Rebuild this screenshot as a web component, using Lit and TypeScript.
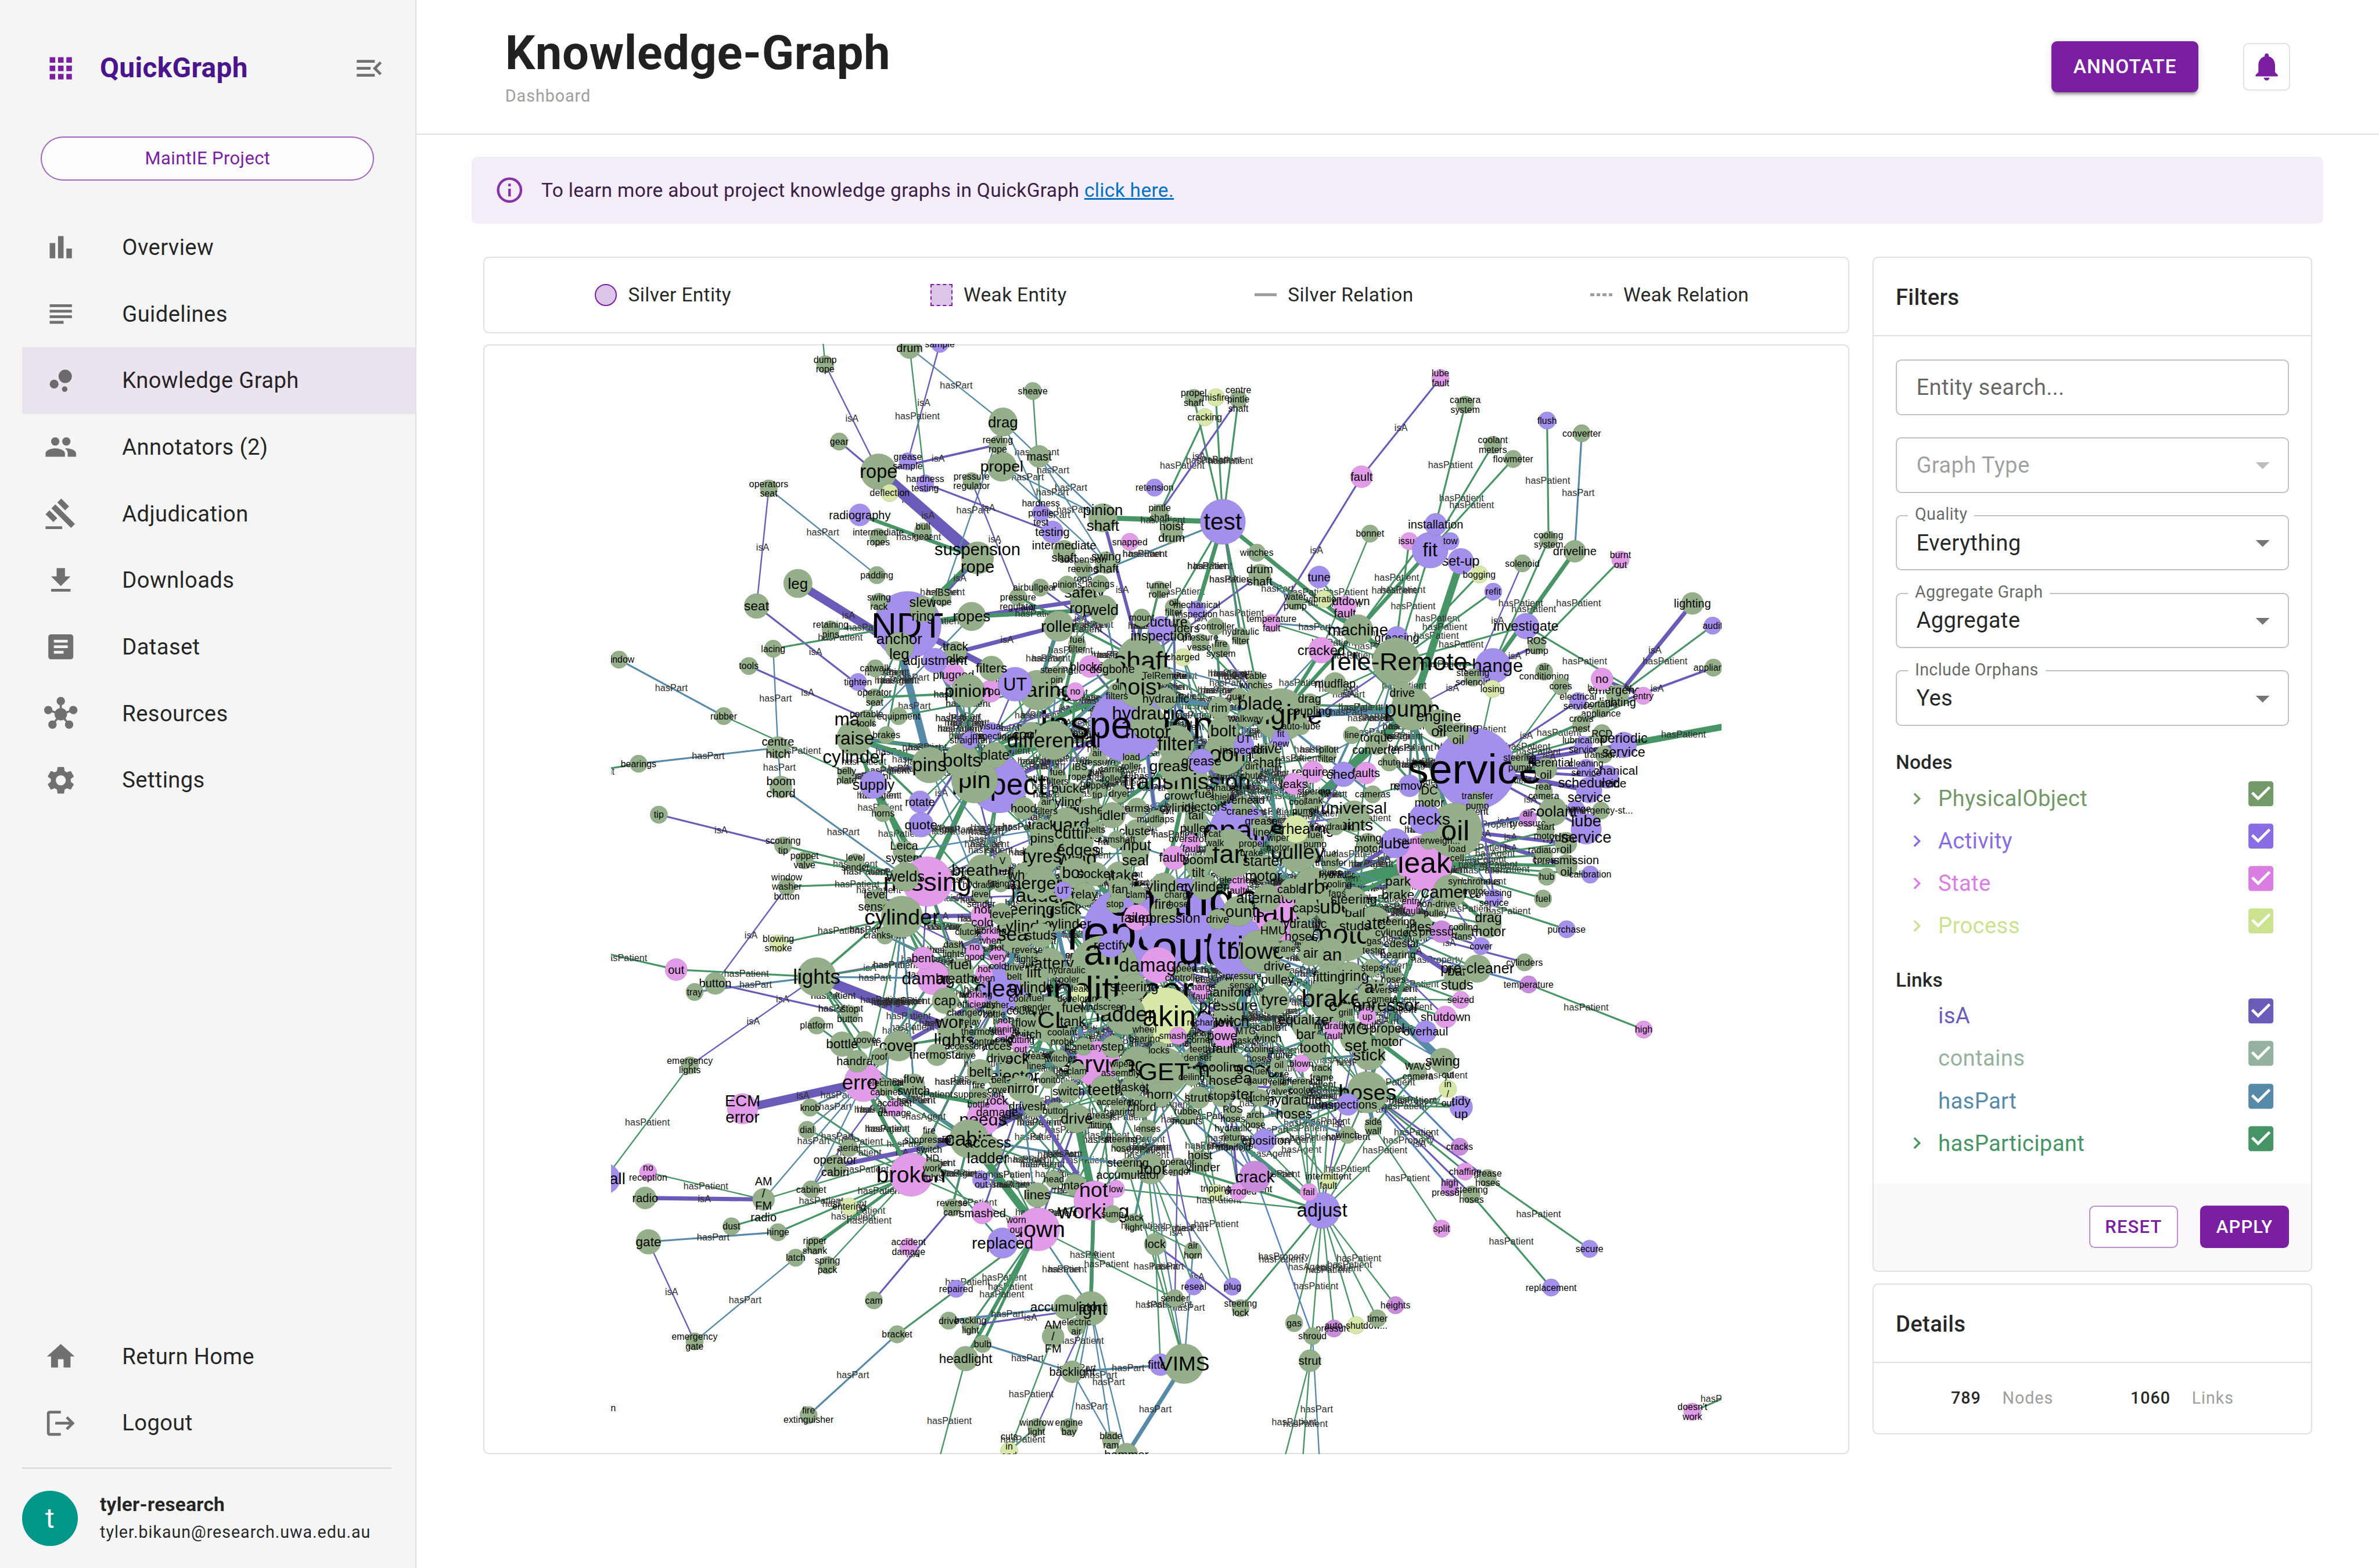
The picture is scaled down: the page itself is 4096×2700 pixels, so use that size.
import { LitElement, css, html, svg, nothing } from 'lit'
import { customElement, property } from 'lit/decorators.js'
import { classMap } from 'lit/directives/class-map.js'
import { styleMap } from 'lit/directives/style-map.js'

/* ---------- icons (24 x 24 grid) ---------- */

const ICONS: Record<string, string> = {
   apps: 'M4 8h4V4H4v4zm6 12h4v-4h-4v4zm-6 0h4v-4H4v4zm0-6h4v-4H4v4zm6 0h4v-4h-4v4zm6-10v4h4V4h-4zm-6 4h4V4h-4v4zm6 6h4v-4h-4v4zm0 6h4v-4h-4v4z',
   menuOpen: 'M3 18h13v-2H3v2zm0-5h10v-2H3v2zm0-7v2h13V6H3zm18 9.59L17.42 12 21 8.41 19.59 7l-5 5 5 5L21 15.59z',
   barChart: 'M4 9h4v11H4zm12 4h4v7h-4zm-6-9h4v16h-4z',
   subject: 'M14 17H4v2h10v-2zm6-8H4v2h16V9zM4 15h16v-2H4v2zM4 5v2h16V5H4z',
   bubble: 'M4 14.4a3.2 3.2 0 1 0 6.4 0a3.2 3.2 0 1 0-6.4 0zM12.8 18a2 2 0 1 0 4 0a2 2 0 1 0-4 0zM10.4 8.8a4.8 4.8 0 1 0 9.6 0a4.8 4.8 0 1 0-9.6 0z',
   people: 'M16 11c1.66 0 2.99-1.34 2.99-3S17.66 5 16 5c-1.66 0-3 1.34-3 3s1.34 3 3 3zm-8 0c1.66 0 2.99-1.34 2.99-3S9.66 5 8 5C6.34 5 5 6.34 5 8s1.34 3 3 3zm0 2c-2.33 0-7 1.17-7 3.5V19h14v-2.5c0-2.33-4.67-3.5-7-3.5zm8 0c-.29 0-.62.02-.97.05 1.16.84 1.97 1.97 1.97 3.45V19h6v-2.5c0-2.33-4.67-3.5-7-3.5z',
   gavel: 'M1 21h12v2H1zM5.245 8.07l2.83-2.827 14.14 14.142-2.828 2.828zM12.317 1l5.657 5.656-2.83 2.83-5.654-5.66zM3.825 9.485l5.657 5.657-2.828 2.828-5.657-5.657z',
   download: 'M5 20h14v-2H5v2zM19 9h-4V3H9v6H5l7 7 7-7z',
   article: 'M19 3H5c-1.1 0-2 .9-2 2v14c0 1.1.9 2 2 2h14c1.1 0 2-.9 2-2V5c0-1.1-.9-2-2-2zm-5 14H7v-2h7v2zm3-4H7v-2h10v2zm0-4H7V7h10v2z',
   hub: 'M8.4 18.2c.38.5.6 1.12.6 1.8 0 1.66-1.34 3-3 3s-3-1.34-3-3 1.34-3 3-3c.44 0 .85.09 1.23.26l1.41-1.77c-.92-1.03-1.29-2.39-1.09-3.69l-2.03-.68c-.54.83-1.46 1.38-2.52 1.38-1.66 0-3-1.34-3-3s1.34-3 3-3 3 1.34 3 3c0 .07 0 .14-.01.21l2.03.68c.64-1.21 1.82-2.09 3.22-2.32V5.91C9.96 5.57 9 4.4 9 3c0-1.66 1.34-3 3-3s3 1.34 3 3c0 1.4-.96 2.57-2.25 2.91v2.16c1.4.23 2.58 1.11 3.22 2.32l2.03-.68c0-.07 0-.14 0-.21 0-1.66 1.34-3 3-3s3 1.34 3 3-1.34 3-3 3c-1.06 0-1.98-.55-2.52-1.37l-2.03.68c.2 1.29-.16 2.65-1.09 3.69l1.41 1.77c.38-.18.79-.27 1.23-.27 1.66 0 3 1.34 3 3s-1.34 3-3 3-3-1.34-3-3c0-.68.22-1.3.6-1.8l-1.41-1.77c-1.35.75-3.01.76-4.37 0L8.4 18.2z',
   settings: 'M19.14 12.94c.04-.3.06-.61.06-.94 0-.32-.02-.64-.07-.94l2.03-1.58c.18-.14.23-.41.12-.61l-1.92-3.32c-.12-.22-.37-.29-.59-.22l-2.39.96c-.5-.38-1.03-.7-1.62-.94l-.36-2.54c-.04-.24-.24-.41-.48-.41h-3.84c-.24 0-.43.17-.47.41l-.36 2.54c-.59.24-1.13.57-1.62.94l-2.39-.96c-.22-.08-.47 0-.59.22L2.74 8.87c-.12.21-.08.47.12.61l2.03 1.58c-.05.3-.09.63-.09.94s.02.64.07.94l-2.03 1.58c-.18.14-.23.41-.12.61l1.92 3.32c.12.22.37.29.59.22l2.39-.96c.5.38 1.03.7 1.62.94l.36 2.54c.05.24.24.41.48.41h3.84c.24 0 .44-.17.47-.41l.36-2.54c.59-.24 1.13-.56 1.62-.94l2.39.96c.22.08.47 0 .59-.22l1.92-3.32c.12-.22.07-.47-.12-.61l-2.01-1.58zM12 15.6c-1.98 0-3.6-1.62-3.6-3.6s1.62-3.6 3.6-3.6 3.6 1.62 3.6 3.6-1.62 3.6-3.6 3.6z',
   home: 'M10 20v-6h4v6h5v-8h3L12 3 2 12h3v8z',
   logout: 'm17 7-1.41 1.41L18.17 11H8v2h10.17l-2.58 2.58L17 17l5-5zM4 5h8V3H4c-1.1 0-2 .9-2 2v14c0 1.1.9 2 2 2h8v-2H4V5z',
   bell: 'M12 22c1.1 0 2-.9 2-2h-4c0 1.1.89 2 2 2zm6-6v-5c0-3.07-1.64-5.64-4.5-6.32V4c0-.83-.67-1.5-1.5-1.5s-1.5.67-1.5 1.5v.68C7.63 5.36 6 7.92 6 11v5l-2 2v1h16v-1l-2-2z',
   info: 'M11,9H13V7H11M12,20C7.59,20 4,16.41 4,12C4,7.59 7.59,4 12,4C16.41,4 20,7.59 20,12C20,16.41 16.41,20 12,20M12,2A10,10 0 0,0 2,12A10,10 0 0,0 12,22A10,10 0 0,0 22,12A10,10 0 0,0 12,2M11,17H13V11H11V17Z',
   dropDown: 'M7 10l5 5 5-5z',
   chevron: 'M10 6 8.59 7.41 13.17 12l-4.58 4.59L10 18l6-6z',
   checkBox: 'M19 3H5c-1.11 0-2 .9-2 2v14c0 1.1.89 2 2 2h14c1.11 0 2-.9 2-2V5c0-1.1-.89-2-2-2zm-9 14l-5-5 1.41-1.41L10 14.17l7.59-7.59L19 8l-9 9z',
}

const icon = (name: string, cls = '') =>
   html`<svg class="icon ${cls}" viewBox="0 0 24 24"><path d=${ICONS[name]}></path></svg>`

/* ---------- graph data ---------- */

type Kind = 'P' | 'A' | 'S' | 'R' | 'Q'

interface GraphNode {
   kind: Kind
   x: number
   y: number
   r: number
   label: string
   under: boolean
}

interface Link {
   type: string
   x1: number
   y1: number
   x2: number
   y2: number
   w: number
}

const NODE_COLORS: Record<Kind, string> = {
   P: '#94af8a', // PhysicalObject
   A: '#a48fec', // Activity
   S: '#e29be8', // State
   R: '#d7e8a8', // Process
   Q: '#c98bdc', // Property
}

const LINK_TYPES: Record<string, [string, string]> = {
   i: ['isA', '#6b5bb9'],
   p: ['hasPart', '#568aa8'],
   t: ['hasPatient', '#479466'],
   g: ['hasAgent', '#479466'],
   y: ['hasProperty', '#5580bd'],
   c: ['contains', '#95b19f'],
}

// Each sector of the layout: origin and vertical scale, then "kind x y radius label" rows.
// "|" breaks a label, "_" before the kind keeps a node beneath its neighbours.
const SECTORS: [number, number, number, string][] = [
   [1300, 740, 0.5102, `P 607 95 19 dump|rope;P 836 24 24 drum;A 918 8 19 sample;P 1170 208 19 sheave;P 1089 339 31 drag;P 1075 435 19 reeving|rope;P 1187 485 24 mast;P 1086 528 32 propel
P 645 422 19 gear;P 752 550 39 rope;A 831 506 19 grease|sample;R 782 640 19 deflection;A 878 600 19 hardness|testing;P 1004 590 19 pressure|regulator;P 454 621 19 operators|seat
A 701 733 24 radiography;P 751 827 19 intermediate|ropes;P 872 803 19 bull|gear;A 1192 724 19 hardness|profile|test;A 1223 805 24 testing;P 1360 745 31 pinion|shaft;A 1500 617 19 retension
P 1514 724 19 pintle|shaft;S 1433 847 19 snapped;P 1020 915 35 suspension|rope;P 1255 887 24 intermediate|shaft;P 1369 935 24 swing|shaft;P 1306 962 19 suspension|reeving|rope
P 747 988 19 padding;P 533 1023 31 leg;P 421 1119 27 seat;P 1190 1041 19 bullgear;P 1263 1028 19 pinions;P 1352 1025 19 lacings;P 1130 1081 19 air|pressure|regulator
P 753 1101 19 swing|rack;A 830 1200 73 NDT;P 872 1132 28 slew|ring;P 925 1082 19 IBS|rope;P 1004 1163 31 ropes;P 1310 1095 31 safety|rope;P 1361 1134 31 weld;P 1240 1204 33 roller
P 622 1218 19 retaining|pins;P 808 1290 31 anchor|leg;_P 868 1275 19 retainer|bolts;A 905 1350 27 adjustment;_P 960 1316 24 track|roller;P 466 1300 19 lacing;P 400 1373 19 tools
P 48 1346 19 window;P 743 1383 19 catwalk;A 696 1441 19 tighten;P 741 1506 19 operator|seat;P 994 1478 36 pinion;_S 955 1410 24 plugged;P 1058 1383 27 filters;_S 1055 1480 24 corroded
A 1122 1450 37 UT;_P 1183 1475 43 bearing;P 1235 1410 19 steering|pin;P 1290 1281 19 fuel|filter;S 1285 1480 19 no;S 1325 1375 24 blocked;P 1385 1385 24 dogbone;P 1465 1350 54 shaft
P 1458 1460 47 hoist;P 1398 1480 19 oil|filters;P 1527 1415 19 TelRemote;P 1465 1168 19 mount;P 1512 1050 19 tunnel|roller;_P 1552 1125 19 oil|filter;A 1518 1217 28 structure|inspection`],
   [2500, 740, 0.5102, `P 41 805 24 hoist|drum;P 101 237 19 propel|shaft;R 161 235 19 misfire;P 222 243 19 centre|pintle|shaft;R 131 319 19 cracking;S 770 153 19 lube|fault;P 837 266 19 camera|system
A 1059 333 19 flush;P 912 436 19 coolant|meters;P 967 496 19 flowmeter;P 1153 387 19 converter;S 556 571 24 fault;A 180 762 49 test;P 272 893 19 winches;P 280 988 24 drum|shaft
A 441 996 24 tune;P 579 812 19 bonnet;A 757 773 24 installation;A 742 882 39 fit;_S 685 844 19 issue;A 797 844 19 tow;_A 825 929 28 set-up;R 875 985 19 bogging;A 913 1058 19 refit
P 992 938 19 solenoid;_P 1063 839 19 cooling|system;P 1134 887 24 driveline;S 1258 923 19 burnt|out;P 1453 1108 24 lighting;A 1508 1202 19 audit;P 1510 1380 19 appliance
A 1002 1204 28 investigate;P 1031 1287 19 ROS|pump;A 912 1372 38 change;P 650 1355 52 Tele-Remote;_A 652 1252 24 greasing;P 546 1220 33 machine;S 447 1306 28 cracked
_S 511 1124 24 shutdown|fault;R 454 1089 19 vibration;P 376 1099 19 water|pump;S 312 1192 19 temperature|fault;_A 109 1134 19 mechanical|inspection;P 160 1205 19 controller
_P 228 1247 19 hydraulic|filter;P 119 1273 19 pressure|vessel;P 175 1300 19 fire|system;R 72 1336 19 charged;_P 65 1213 24 ladders;P 269 1433 19 cable|winches;P 484 1447 24 mudflap
P 415 1537 24 drag|coupling;P 281 1533 38 blade;_P 223 1503 19 guard;P 170 1550 24 rim;P 858 1422 19 steering|solenoid;R 911 1470 19 losing;P 1051 1397 19 air|conditioning
P 1096 1459 19 cores;S 1208 1428 24 no;_P 1250 1500 24 emergency|lighting;S 1320 1499 19 entry;A 1143 1522 19 electrical|service;P 1205 1555 19 portable|appliance;P 666 1487 24 drive`],
   [1300, 1500, 0.5421, `A 1425 125 80 inspection;A 1430 955 100 repair;P 332 90 19 rubber;P 479 216 24 centre|hitch;P 101 280 19 bearings;P 487 373 24 boom|chord;P 156 483 19 tip;P 493 606 19 scouring|tip
P 551 665 19 poppet|valve;P 689 673 19 level|sender;P 503 770 19 window|washer|button;R 480 997 19 blowing|smoke;S 203 1101 24 out;P 309 1156 24 button;P 253 1190 19 tray
P 584 1130 42 lights;P 674 1278 19 stop|button;P 584 1324 19 platform;P 653 1398 27 bottle;_P 714 1381 19 grooves;P 806 1405 33 cover;P 754 1448 19 roof;P 694 1466 24 handrail
S 711 1550 42 error;P 240 1483 19 emergency|lights;P 686 178 38 mast|raise|cylinder;P 719 100 19 portable|tools;P 806 90 19 equipment;P 773 166 19 brakes;P 665 327 19 belly|plate
A 738 364 30 supply;A 864 432 24 rotate;A 867 523 27 quote;P 764 477 19 horns;_P 821 630 24 Leica|system;S 884 750 54 missing;P 825 730 31 welds;_P 744 825 24 level|sensor
P 815 890 45 cylinder;_P 769 965 19 crankshaft;S 872 1055 24 bent;S 900 1135 36 damage;P 890 285 39 pins;P 978 268 38 bolts;P 1012 345 50 pin;A 1078 362 62 inspect;P 1067 245 28 plate
A 1000 185 19 straighten;A 1057 150 19 visual|inspection;_P 1165 165 28 cooler;P 1227 187 42 differential;_P 1345 255 19 low|air|pressure|regulator;P 1437 272 19 load|roller
P 1482 115 37 hydraulic|motor;P 1145 458 24 hood;P 1207 450 19 air|filters;P 1237 332 19 fuel|filters;P 1297 312 19 IBS|ropes;P 1385 320 19 carrier|roller;_P 1273 405 27 bucket|cylinder
P 1345 385 19 ripper|tip;P 1405 400 19 dryer;_P 1325 465 26 bushes;P 1386 485 28 idler;P 1452 457 22 arms;P 1260 525 38 guard;P 1195 550 27 track|pins;P 1340 543 19 belts;P 1452 547 25 cluster
P 1503 500 19 mudflaps;P 1397 583 19 camshaft;P 1293 590 33 cutting|edges;P 1195 650 38 tyres;P 1235 615 40 tool;P 1290 655 40 wing;P 1088 668 19 V;P 1033 705 34 breather
P 1083 757 19 fittings;_P 1150 725 28 wheel;P 1190 755 36 emergency;P 1284 715 33 box;P 1340 720 26 socket;P 1405 725 30 intake;P 1448 635 30 input|seal;A 1252 785 19 UT
P 1310 800 25 relay;P 1185 805 40 ladder;P 1406 780 24 fan;P 1455 803 19 clamp;P 1393 840 19 stop;P 1030 800 19 hydraulic|level|sender;S 1033 885 25 not|cold;P 1085 880 24 level
P 1150 893 34 steering|cylinder;P 1265 890 28 stick|cylinder;P 1225 860 50 ATC;S 1452 893 28 failed;P 1525 868 28 fire|suppression;P 1363 1105 76 air|conditioner;A 1382 1003 27 rectify
S 1510 1083 39 damaged;P 1445 1170 28 steering;R 1297 1197 19 leak|developing;P 1420 1280 44 ladder;P 1215 1300 50 ICL;P 1278 1280 28 fuel|tank;P 1360 1248 19 windscreen
P 1150 1312 24 coolant|flow|switch;S 1092 1340 19 not|running|cold;P 975 1108 28 fuel|breather;S 1038 1117 19 hot|when;S 1012 1030 19 no|good;S 1055 965 19 working|when
S 1075 1050 19 not|very|cold;P 992 950 19 clutch;P 955 1020 19 dash|lights;P 1155 1040 19 reverse|lights;P 1215 1075 33 battery;P 1193 965 27 studs;P 1173 1142 30 lift|cylinder
P 1120 1110 19 drive|belt;P 1120 960 40 seal;A 1090 1175 50 clean;P 1262 1122 19 hydraulic|cooler;P 932 1225 28 cap;P 1065 1260 19 washer|bottle;S 1017 1220 19 working|efficiently
P 1145 1236 19 coolant|sender;P 1180 1232 19 fuel|sender;P 957 1345 36 work|lights;P 1003 1290 19 changeover|relay;P 1035 1368 19 thermostat|control;P 910 1440 24 thermostat
P 988 1425 19 accessory|drive;S 1137 1400 19 cutting|out;P 1080 1430 24 access|drive;P 1250 1370 19 coolant|probe;P 1308 1408 19 planetary;P 1387 1408 24 step;S 1345 1478 50 service
P 1243 1455 19 switches;P 1290 1505 19 clam;P 1408 1495 19 wiper|assembly;P 1473 1358 19 wheel|bearing;P 1512 1423 19 locks;P 1180 1465 19 grease|lines;P 1120 1490 34 rock|ejector
P 1027 1510 28 belt;_P 1455 1480 40 auger;P 1212 1540 19 monitor`],
   [2500, 1500, 0.5421, `A 863 300 88 service;A 75 915 97 change|out;A 225 1015 66 trip;A 222 545 62 repairs;P 338 85 57 engine;P 693 62 46 pump;P 181 150 33 bolt;A 237 205 22 UT|inspection
P 185 240 46 boom;P 52 200 40 filter;A 122 270 27 grease;P 45 290 32 grease;P 300 248 28 drive|shaft;P 258 308 19 dirt|chute;A 337 180 19 fit|new;P 392 130 19 auto-lube
P 242 100 19 walkway;P 530 166 19 line;P 597 200 24 torque|converter;P 464 242 19 pilot|filter;P 631 275 19 chute;S 424 313 24 requires;S 373 360 24 leaks;A 507 322 27 check
S 568 317 24 faults;P 586 402 19 cameras;A 686 368 24 remove;P 765 120 31 engine|oil;P 818 160 24 steering|oil;P 985 275 19 steering|pump;P 1056 300 24 differential|oil
P 1050 390 19 rear|camera;A 1267 205 28 periodic|service;_A 1158 205 19 lubrication|service;A 1165 297 19 cleaning|service;_A 1222 332 25 mechanical|service;A 1173 385 28 scheduled|service
_P 1208 160 20 RCD;_P 1213 243 19 transform;P 1152 120 19 crows|nest;P 1075 470 31 coolant;_A 1137 460 19 change;_P 1205 467 19 emergency-st...;A 1165 540 33 lube|service
Q 1007 497 19 air|pressure;P 1055 550 19 start|motor;_P 1110 597 24 hydraulic|oil;P 1050 643 19 radiator|cores;P 1111 687 24 transmission|oil;A 1176 722 19 calibration;P 1058 730 19 hub
P 1048 818 19 fuel;P 870 428 19 transfer|pump;P 810 545 59 oil;A 727 500 34 checks;A 647 597 32 lube;S 726 675 60 leak;P 738 587 19 counterweigh...;P 815 637 19 load|cell
P 573 597 22 swing|motor;P 655 775 27 park|brake;P 795 790 36 camera;A 915 815 19 greasing|service;P 862 768 19 synchronous|motor;S 692 847 19 entry|fault;P 758 857 19 non-drive|pulley
P 900 922 28 drag|motor;Q 773 950 24 pressure;A 1112 940 19 purchase;A 880 1007 19 cover;P 832 950 19 cooling|fans;P 998 1072 19 cylinders;Q 1009 1160 19 temperature;S 1321 1340 19 high
P 870 1097 30 pre-cleaner;_P 815 1135 28 bar|studs;S 825 1222 19 seized;S 784 1290 24 shutdown;A 730 1348 24 overhaul;P 776 1465 28 swing;P 709 1507 19 WAVS|camera;P 577 1440 34 stick
P 540 1370 34 MG|set;S 572 1288 19 tray|up|fault;P 625 1362 26 propel|motor;P 478 1215 52 brake;P 320 1222 33 tyre;P 513 1272 19 grill;P 590 1205 36 air|compressor;P 525 1125 30 wiring
P 467 1130 28 fitting;P 512 960 58 motor;P 590 915 36 hatch;P 538 900 27 ball|studs;P 480 850 40 lube;P 406 855 27 caps;S 340 875 60 fault;P 222 868 33 mounts;P 300 815 30 alternator
S 222 765 20 electrical|faults;P 166 900 22 drive;P 317 945 24 HMU;P 393 945 26 hydraulic|hoses;P 280 1028 46 blower;P 353 1018 19 cranes;P 418 1035 28 air;P 470 1040 36 fan
P 328 1115 26 drive|pulley;P 236 1145 19 pressure|sensor;P 75 1115 19 speed|controller;S 122 1188 19 charge|fault;P 190 1190 27 manifold;P 195 1275 31 pressure|switch;A 132 1312 19 recharge
S 184 1365 26 low|power|fault;S 58 1365 19 smashed;R 25 1285 61 leaking;P 383 632 43 pulley;R 378 540 30 overheating;P 535 490 34 universal|joints;P 485 530 19 hydraulic;P 430 582 19 fuel|pump
P 200 640 54 fan;P 290 697 30 starter|motor;P 158 577 19 cat|walk;P 258 617 19 propel|brake;P 330 595 19 wiper|motor;P 284 530 22 grease|line;S 48 655 26 faulty;P 113 690 26 boom|tilt
P 107 510 25 tail|pulley;P 233 447 22 overhead|cranes;S 95 600 20 overstroke|fault;P 82 350 47 transmission;P 65 430 25 crowd|cylinder;P 130 425 25 fuel|injectors;P 178 395 19 exhaust|shield
P 365 780 24 cable;P 425 770 42 turbo;P 490 760 19 hydraulic|cooling|fans;P 400 450 19 coolant|pump;P 427 427 19 steering|tank|oil;P 473 675 19 fuel|transfer|pump;P 535 820 27 steering
S 480 1345 20 hydraulic|fault;P 405 1330 28 equalizer|bar;P 430 1410 29 tooth;P 302 1352 22 cable|winch;P 242 1365 19 MTG|gasket;S 393 1475 19 blown;P 448 1512 19 track|frame
P 332 1480 19 engine|oil|hose;P 278 1437 19 cooling|hoses;P 180 1517 27 cooling|hose;_P 190 1500 47 compressor;P 280 1525 19 fuel|gauge;_P 92 1453 19 condenser;P 95 1530 19 ceiling
P 118 1400 19 corner|teeth;P 655 1020 22 pedestal|bearing;P 590 1005 19 gas|tester;P 650 932 22 steering|cylinders;_P 715 930 28 pedestal;P 585 1093 19 steps;P 642 1120 19 fuel|hoses
P 612 1200 19 reverse|camera;P 740 410 24 DC|motor;P 20 1507 52 GET;P 60 820 19 charge|hose;P 130 770 28 cylinder;P 20 770 30 cylinder;P 25 20 24 hydraulic`],
   [1300, 2330, 0.5293, `S 383 128 33 ECM|error;P 566 123 19 knob;P 558 214 19 dial;S 127 388 19 no|reception;P 119 492 24 radio;P 440 498 24 AM|/|FM|radio;A 10 413 33 install;P 128 671 27 gate
P 353 608 19 dust;P 479 632 19 hinge;P 579 687 19 ripper|shank;P 527 736 19 latch;P 613 767 19 spring|pack;P 569 457 19 cabinet;P 634 361 24 operator|cabin;P 672 288 19 aerial
R 672 527 19 entering;S 840 397 47 broken;P 898 370 19 HD|work|lights;P 889 255 19 fire|suppression|switch;P 997 250 42 cabin;P 1048 297 31 access|ladder;_S 1035 170 36 needs
S 1073 118 24 rock|damage;A 1030 418 19 tag|out;S 795 125 19 accident|damage;P 951 531 19 reverse|cam;S 1033 553 24 smashed;P 1182 480 27 lines;S 1184 620 47 down;S 1125 602 19 worn|out
A 1088 676 33 replaced;S 833 692 19 accident|damage;A 962 863 19 repaired;P 739 910 19 cam;P 942 993 19 drive;P 1001 1012 19 backing|light;P 802 1049 19 bracket;P 1034 1088 19 bulb
P 988 1148 27 headlight;P 562 1379 19 fire|extinguisher;P 253 1078 19 emergency|gate;P 1260 938 27 accumulator;P 1327 943 37 light;P 1225 1058 24 AM|/|FM;P 1288 1018 19 electric|air
P 1277 1202 24 backlight;P 1180 1428 19 windrow|light;P 1268 1428 19 engine|bay;R 1106 1525 19 cuts|in|and|out;P 1382 1482 19 blade|ram;P 1424 1540 25 hammer;P 1502 681 24 lock
P 1444 592 19 back|light;P 1386 558 19 sump;S 1335 503 43 not|working;S 1395 455 19 low;_P 1285 440 24 contactor;P 1227 415 19 head;P 1428 373 24 steering|accumulator;P 1490 373 33 door
P 1409 270 19 steering|hose;P 1480 208 19 lenses;P 1465 120 24 chord;P 1405 120 19 accelerator|bearing;P 1289 168 31 drive;P 1231 135 19 button;P 1173 117 24 driveshaft;P 1138 45 28 mirror
P 1078 30 19 belt|cover;P 1267 57 24 switch;P 1438 40 24 gasket;P 1514 70 27 horn;P 1355 175 19 grease|fitting;P 1023 70 19 fire|suppression|bottle;_A 1516 1173 24 fitted;P 847 30 24 flow|switch
P 770 40 19 electrical|cabinet;P 1367 50 33 teeth;P -4 1350 19 junction`],
   [2500, 2330, 0.5293, `P 75 1169 43 VIMS;P 50 902 19 sender;P 99 706 19 air|horn;A 101 853 19 reseal;A 206 854 19 plug;P 228 942 19 steering|lock;P 118 342 24 hoist|cylinder;P 57 364 19 operator|sender
R 161 472 19 tripping|out;_S 222 466 19 corroded;Q 267 405 34 crack;A 292 257 25 reposition;P 208 245 19 hydraulic|return|manifold;P 207 150 19 ROS|hoses;P 84 158 19 rubber|mounts
P 268 172 19 arch|hose;P 373 120 28 hydraulic|hoses;A 519 110 24 inspections;P 518 234 19 winch;P 588 200 19 side|wall;A 826 121 25 tidy|up;Q 822 283 19 cracks;S 837 384 19 chaffing
P 898 411 19 grease|hoses;Q 795 450 19 high|pressure;P 854 478 19 steering|hoses;S 773 617 19 split;A 1174 700 19 secure;A 1070 858 19 replacement;S 413 468 19 fail
R 466 422 19 intermittent|fault;A 449 543 39 adjust;P 373 1003 19 gas;Q 481 1025 19 pressure;P 423 1056 19 shroud;R 541 1012 19 auto-shutdow...;P 599 984 19 timer;Q 648 930 19 heights
P 416 1157 24 strut;S 1453 1365 19 doesn't|work;P 281 83 19 latches;P 115 82 24 struts;P 177 75 24 stops;P 235 35 32 rear|step;P 333 38 19 relief|valves;P 392 33 19 differential|cooler
P 572 60 45 hoses;R 790 47 19 cut|in|/|out`],
]

const NODES: GraphNode[] = SECTORS.flatMap(([ox, oy, sy, rows]) =>
   rows.split(/[;\n]/).map((row) => {
      const [kind, x, y, r, ...label] = row.trim().split(' ')
      return {
         kind: kind.replace('_', '') as Kind,
         x: ox + Number(x) * 0.7972,
         y: oy + Number(y) * sy,
         r: Number(r),
         label: label.join(' '),
         under: kind.startsWith('_'),
      }
   })
)

// "type width source > target"; "@x,y" is a node that lies beyond the visible canvas.
const LINK_ROWS = `i 3 dump|rope>rope;t 3 dump|rope>@1762,560;i 3 sample>grease|sample;p 3 drum>drag;t 3 drum>hardness|testing;t 3 sheave>hardness|profile|test;i 4 gear>suspension|rope
i 5 reeving|rope>rope;i 26 rope>suspension|rope;p 3 operators|seat>padding;i 3 operators|seat>seat;t 8 radiography>suspension|rope;p 3 mast>pinion|shaft;p 3 drag>pinion|shaft
p 3 propel>pinion|shaft;p 3 drag>IBS|rope;p 3 drag>testing;p 3 propel>swing|shaft;p 3 mast>swing|shaft;i 4 hardness|testing>testing;i 3 pressure|regulator>air|pressure|regulator
p 4 suspension|rope>NDT;t 14 suspension|rope>NDT;i 4 suspension|rope>IBS|rope;i 18 leg>anchor|leg;i 4 seat>operator|seat;p 4 window>rubber;t 4 lacing>NDT;p 3 lacing>centre|hitch
i 4 tools>portable|tools;t 4 retaining|pins>NDT;t 11 pinion|shaft>test;i 7 pinion|shaft>shaft;t 3 rubber>supply;p 4 centre|hitch>bearings;t 4 bearings>@1180,1685
p 3 centre|hitch>boom|chord;p 4 boom|chord>welds;i 4 tip>scouring|tip;t 4 scouring|tip>missing;t 4 level|sender>missing;t 4 poppet|valve>missing;t 4 window|washer|button>missing
i 3 window|washer|button>button;t 4 blowing|smoke>cylinder;t 4 out>lights;t 4 out>@1240,2046;p 4 tray>lights;i 4 button>stop|button;i 3 emergency|lights>lights;i 22 lights>work|lights
i 4 lights>bent;p 4 lights>damage;t 3 lights>missing;t 3 emergency|lights>install;i 18 ECM|error>error;t 3 no|reception>AM|/|FM|radio;i 9 radio>AM|/|FM|radio;i 3 gate>emergency|gate
p 4 gate>hinge;p 3 latch>emergency|gate;t 4 latch>broken;t 6 ripper|shank>broken;t 3 spring|pack>broken;t 4 dust>broken;t 4 hinge>broken;p 3 AM|/|FM|radio>error;t 3 AM|/|FM|radio>cabin
t 4 knob>broken;t 4 dial>broken;p 4 knob>error;p 3 dial>error;t 4 entering>broken;i 10 operator|cabin>cabin;i 3 cabinet>electrical|cabinet;p 3 cabinet>error;t 3 aerial>cabin
i 4 cam>reverse|cam;p 4 bracket>fire|extinguisher;t 4 bracket>down;t 4 drive>down;t 4 backing|light>down;t 6 bulb>down;t 8 headlight>down;p 5 drive>accumulator;i 4 backing|light>light
p 4 bulb>backlight;t 3 headlight>@2017,3206;p 5 backlight>VIMS;p 3 backlight>blade|ram;i 3 windrow|light>light;t 4 windrow|light>cuts|in|and|out;p 3 light>blade|ram;p 3 light>hammer
p 3 light>engine|bay;p 9 VIMS>hammer;t 3 AM|/|FM>cuts|in|and|out;t 3 lock>fitted;i 8 light>not|working;t 8 light>not|working;t 3 light>down;p 3 light>down;t 3 backlight>light
p 3 fitted>VIMS;i 4 lock>steering|lock;i 3 sender>operator|sender;t 4 adjust>steering|lock;g 3 adjust>gas;t 3 adjust>strut;t 3 adjust>pressure;t 3 adjust>auto-shutdow...
t 3 adjust>timer;t 3 adjust>heights;y 3 crack>shroud;p 3 shroud>@2855,3205;t 3 strut>@2763,3206;t 3 strut>@2812,3212;g 3 fail>hydraulic|hoses;t 3 fail>blown;t 3 intermittent|fault>hoses
g 3 intermittent|fault>latches;t 3 side|wall>adjust;t 3 side|wall>split;t 4 side|wall>WAVS|camera;t 4 grease|hoses>secure;t 4 steering|hoses>replacement;y 4 cracks>stick
i 4 hoses>grease|hoses;i 4 hoses>steering|hoses;y 4 hoses>high|pressure;t 4 hoses>chaffing;t 5 hoses>tidy|up;t 4 inspections>tidy|up;i 3 winch>cable|winch;p 8 hoses>side|wall
p 3 plug>door;t 3 plug>hoist|cylinder;t 3 reseal>door;i 3 air|horn>horn;t 3 air|horn>not|working;t 3 corroded>stops;t 3 tripping|out>struts;y 4 crack>ROS|hoses;y 4 crack>rubber|mounts
i 10 hydraulic|hoses>inspections;i 4 hydraulic|hoses>arch|hose;t 4 reposition>inspections;g 3 fail>ROS|hoses;t 3 VIMS>lock;p 3 VIMS>door;t 3 sender>down
t 4 propel|shaft>test;t 4 misfire>test;t 4 centre|pintle|shaft>test;t 4 cracking>pintle|shaft;i 4 centre|pintle|shaft>pintle|shaft;i 4 lube|fault>fault;i 4 fault>temperature|fault
t 4 camera|system>installation;t 4 coolant|meters>fit;t 4 flowmeter>fit;t 4 flush>cooling|system;p 4 converter>driveline;t 3 bonnet>cracked;t 9 driveline>change;t 4 cooling|system>change
i 3 solenoid>steering|solenoid;t 4 burnt|out>ROS|pump;t 4 investigate>entry;i 9 lighting>emergency|lighting;t 4 audit>emergency|lighting;i 5 appliance>portable|appliance
t 9 test>Tele-Remote;t 4 test>blade;t 4 test>shaft;t 16 set-up>pump;t 4 fit>Tele-Remote;t 4 fit>machine;t 8 fit>engine;t 4 installation>machine;t 4 bogging>Tele-Remote;t 4 refit>Tele-Remote
t 4 issue>greasing;t 4 tune>machine;i 4 water|pump>pump;p 5 drum|shaft>water|pump;t 5 drum|shaft>machine;i 4 drum|shaft>shaft;t 11 machine>Tele-Remote;t 16 Tele-Remote>pump
t 8 cracked>engine;i 6 change>ROS|pump;t 5 change>Tele-Remote;t 4 investigate>Tele-Remote;p 16 pump>engine;t 3 losing>service;t 3 cores>oil;p 4 temperature|fault>machine;t 20 change|out>pump
i 7 no>entry;t 4 no>emergency|lighting;t 14 periodic|service>@3768,1564;i 9 periodic|service>service;i 11 scheduled|service>service;i 6 mechanical|service>service;i 5 lube|service>service
i 5 cleaning|service>service;i 5 lubrication|service>service;i 4 electrical|service>service;t 4 entry>service;t 4 RCD>service;t 4 crows|nest>service;t 5 differential|oil>service
t 3 rear|camera>service;i 6 oil>coolant;i 8 oil>hydraulic|oil;i 9 oil>transmission|oil;t 4 leak>hub;t 4 leak>fuel;t 7 leak>transmission|oil;t 4 leak>radiator|cores;t 4 calibration>leak
t 4 start|motor>leak;g 4 hydraulic|oil>leak;y 4 air|pressure>oil;i 4 greasing|service>service;t 8 camera>drag|motor;t 4 purchase>camera;t 4 temperature>high;y 4 temperature>motor
i 4 cylinders>hatch;i 10 hatch>bar|studs;y 4 pressure>motor;i 4 cover>pedestal;t 4 seized>steps;t 4 shutdown>air|compressor;p 16 swing>air|compressor;t 5 WAVS|camera>hoses;t 4 overhaul>brake
t 4 cut|in|/|out>swing;t 26 leak>change|out;i 14 oil>service;t 14 service>leak;t 12 NDT>ropes;i 9 ropes>safety|rope;i 9 track|roller>roller;i 14 NDT>filters;p 16 anchor|leg>pins
p 12 mast|raise|cylinder>pins;i 6 roller>weld;t 12 supply>missing;t 12 pin>missing;t 26 bolts>differential;i 9 cylinder>not|cold;i 12 missing>cylinder;i 12 engine>bolt
i 16 cabin>driveshaft;t 16 down>cabin;t 16 not|working>drive;t 12 lines>down;i 12 work|lights>clean;p 9 roller>bearing;t 9 weld>ropes;i 9 inspection>inspect;t 8 safety|rope>weld
t 4 doesn't|work>@3790,2995`

function findNode(label: string, near?: { x: number; y: number }) {
   const hits = NODES.filter((n) => n.label === label)
   if (!near || hits.length < 2) return hits[0]
   return hits.reduce((a, b) => (Math.hypot(a.x - near.x, a.y - near.y) <= Math.hypot(b.x - near.x, b.y - near.y) ? a : b))
}

function buildLinks(): Link[] {
   const links: Link[] = []
   const linked = new Set<GraphNode>()
   for (const row of LINK_ROWS.split(/[;\n]/)) {
      const [, type, w, from, to] = row.trim().match(/^(\w) (\d+) (.+)>(.+)$/)!
      let a = findNode(from)
      let b: { x: number; y: number } | undefined
      if (to.startsWith('@')) {
         const [x, y] = to.slice(1).split(',').map(Number)
         b = { x, y }
      } else {
         b = findNode(to, a)
         if (b) a = findNode(from, b)
      }
      if (!a || !b) continue
      linked.add(a)
      links.push({ type, x1: a.x, y1: a.y, x2: b.x, y2: b.y, w: Number(w) })
   }
   // the crowded middle: every node reaches for a few of the hubs around it
   const hubs = NODES.filter((n) => n.r >= 38)
   NODES.forEach((n, i) => {
      const reach = Math.hypot(n.x - 2480, n.y - 2000)
      if (reach > 770) return
      const near = hubs
         .filter((h) => h !== n)
         .map((h) => ({ h, d: Math.hypot(h.x - n.x, h.y - n.y) }))
         .filter(({ d }) => d > n.r + 40 && d < 620)
         .sort((a, b) => a.d - b.d)
      const count = linked.has(n) ? 1 : 3
      for (let k = 0; k < count && near.length; k++) {
         const { h } = near[(i * 5 + k * 7) % Math.min(near.length, reach > 600 ? 7 : 14)]
         const pick = (i + k * 3) % 8
         const type = n.kind === 'Q' ? 'y' : pick < 4 ? 't' : pick === 4 ? 'g' : pick === 5 ? 'i' : pick === 6 ? 'p' : n.kind === 'P' ? 'p' : 't'
         links.push({ type, x1: n.x, y1: n.y, x2: h.x, y2: h.y, w: (i + k) % 23 === 0 ? 9 : (i + k) % 9 === 0 ? 5 : 3.2 })
      }
   })
   return links
}

const LINKS = buildLinks()
const DRAWN = [...NODES].sort((a, b) => Number(b.under) - Number(a.under) || b.r - a.r)

@customElement('knowledge-graph')
export class KnowledgeGraph extends LitElement {
   static styles = css`
      :host {
         display: block;
         width: 800px;
         height: 800px;
      }
      .canvas {
         display: block;
         width: 100%;
         height: 100%;
         overflow: hidden;
         font-family: 'Liberation Sans', Arial, sans-serif;
      }
      text {
         text-anchor: middle;
         dominant-baseline: central;
      }
      .link-label {
         font-size: 20.2px;
         fill: #2b2b2b;
      }
      circle {
         stroke: rgba(80, 100, 70, 0.25);
         stroke-width: 1;
      }
   `

   renderLink(l: Link) {
      const [name, color] = LINK_TYPES[l.type]
      return svg`
         <line x1=${l.x1} y1=${l.y1} x2=${l.x2} y2=${l.y2} stroke=${color} stroke-width=${l.w}></line>
         <text class="link-label" x=${(l.x1 + l.x2) / 2} y=${(l.y1 + l.y2) / 2}>${name}</text>`
   }

   renderNode(n: GraphNode) {
      const size = n.r * 1.04
      const lines = n.label.split('|')
      return svg`
         <circle cx=${n.x} cy=${n.y} r=${n.r} fill=${NODE_COLORS[n.kind]}></circle>
         ${lines.map((line, i) => svg`
            <text x=${n.x} y=${n.y + (i - (lines.length - 1) / 2) * size * 1.04} font-size=${size}>${line}</text>`)}`
   }

   render() {
      return html`
         <svg class="canvas" viewBox="1321 744 2400 2400">
            ${LINKS.map((l) => this.renderLink(l))}
            ${DRAWN.map((n) => this.renderNode(n))}
         </svg>
      `
   }
}

/* ---------- filter tree ---------- */

interface TreeItem {
   label: string
   color: string
   open?: boolean
}

const NODE_ITEMS: TreeItem[] = [
   { label: 'PhysicalObject', color: '#739968', open: true },
   { label: 'Activity', color: '#886ce4', open: true },
   { label: 'State', color: '#da7ee3', open: true },
   { label: 'Process', color: '#cbe28f', open: true },
]

const LINK_ITEMS: TreeItem[] = [
   { label: 'isA', color: '#6b5bb9' },
   { label: 'contains', color: '#95b19f' },
   { label: 'hasPart', color: '#568aa8' },
   { label: 'hasParticipant', color: '#479466', open: true },
]

@customElement('filter-tree')
export class FilterTree extends LitElement {
   @property() heading = ''
   @property({ attribute: false }) items: TreeItem[] = []

   static styles = css`
      :host {
         display: block;
         margin-top: 16.4px;
      }
      .heading {
         height: 17px;
         line-height: 20px;
         font-size: 14px;
         font-weight: 500;
         letter-spacing: 0.1px;
      }
      .row {
         display: flex;
         align-items: center;
         height: 30.62px;
         padding: 0 8.4px 0 6.6px;
      }
      .icon {
         flex: none;
         width: 24px;
         height: 24px;
         fill: currentColor;
      }
      .toggle {
         display: flex;
         width: 18px;
         margin-right: 6px;
         padding-top: 7px;
      }
      .chevron {
         width: 17px;
         height: 17px;
      }
      .label {
         flex: 1;
         padding-top: 7.4px;
         font-size: 16px;
         line-height: 23px;
         letter-spacing: 0.15px;
      }
   `

   render() {
      return html`
         <div class="heading">${this.heading}</div>
         ${this.items.map((item) => html`
            <div class="row" style=${styleMap({ color: item.color })}>
               <span class="toggle">${item.open ? icon('chevron', 'chevron') : nothing}</span>
               <span class="label">${item.label}</span>
               ${icon('checkBox')}
            </div>
         `)}
      `
   }
}

/* ---------- page ---------- */

const NAV = [
   ['barChart', 'Overview'],
   ['subject', 'Guidelines'],
   ['bubble', 'Knowledge Graph'],
   ['people', 'Annotators (2)'],
   ['gavel', 'Adjudication'],
   ['download', 'Downloads'],
   ['article', 'Dataset'],
   ['hub', 'Resources'],
   ['settings', 'Settings'],
]

const NAV_BOTTOM = [
   ['home', 'Return Home'],
   ['logout', 'Logout'],
]

const SELECTS = [
   ['Quality', 'Everything'],
   ['Aggregate Graph', 'Aggregate'],
   ['Include Orphans', 'Yes'],
]

@customElement('app-root')
export class AppRoot extends LitElement {
   static styles = css`
      * { box-sizing: border-box }

      :host {
         display: block;
         width: 4096px;
         height: 2700px;
         overflow: hidden;
         background: #fff;
      }

      /* the page is laid out on a 1714px wide grid and scaled up */
      .page {
         display: flex;
         zoom: 2.38973;
         width: 1714px;
         height: 1130px;
         font-family: Roboto, 'Liberation Sans', sans-serif;
         font-size: 16px;
         letter-spacing: 0.15px;
         color: rgba(0, 0, 0, 0.87);
      }

      .icon {
         flex: none;
         width: 24px;
         height: 24px;
         fill: currentColor;
      }

      /* sidebar */
      .sidebar {
         display: flex;
         flex-direction: column;
         width: 300px;
         height: 1130px;
         background: #f5f5f5;
         border-right: 1px solid #e0e0e0;
      }
      .brand {
         display: flex;
         align-items: center;
         height: 98.2px;
         padding: 0 21px 0 32px;
         color: #7b1fa2;
      }
      .brand-name {
         flex: 1;
         margin-left: 16px;
         font-size: 20px;
         font-weight: 700;
         letter-spacing: 0.15px;
         color: #4a148c;
      }
      .grey { color: rgba(0, 0, 0, 0.54) }
      .project {
         display: flex;
         align-items: center;
         justify-content: center;
         height: 32px;
         margin: 0 29.5px 24px;
         border: 1px solid rgba(123, 31, 162, 0.7);
         border-radius: 16px;
         background: #fdfdfd;
         font-size: 13px;
         color: #7b1fa2;
      }
      .nav-item {
         display: flex;
         align-items: center;
         gap: 32px;
         height: 48px;
         margin-left: 16px;
         padding-left: 16px;
      }
      .nav-item .icon { color: rgba(0, 0, 0, 0.54) }
      .active { background: #ebe4ee }
      .spacer { flex: 1 }
      .user {
         display: flex;
         align-items: center;
         gap: 16px;
         height: 72.6px;
         margin: 8px 17px 0 16px;
         border-top: 1px solid #d8d8d8;
      }
      .avatar {
         display: flex;
         align-items: center;
         justify-content: center;
         width: 40px;
         height: 40px;
         border-radius: 50%;
         background: #009688;
         color: #fff;
         font-size: 20px;
      }
      .user-name {
         font-size: 14px;
         font-weight: 700;
         line-height: 20px;
         letter-spacing: 0.1px;
      }
      .user-mail {
         font-size: 12px;
         line-height: 20px;
         letter-spacing: 0.4px;
      }

      /* header */
      .main {
         flex: 1;
         min-width: 0;
      }
      .header {
         display: flex;
         align-items: center;
         height: 97px;
         padding: 0 64px;
         border-bottom: 1px solid #e0e0e0;
      }
      .titles {
         flex: 1;
         padding-top: 0.8px;
      }
      .title {
         margin: 0;
         font-size: 34px;
         font-weight: 700;
         line-height: 42px;
         letter-spacing: 0.25px;
      }
      .subtitle {
         font-size: 12px;
         line-height: 20px;
         letter-spacing: 0.4px;
         color: #9e9e9e;
      }
      .button {
         display: flex;
         align-items: center;
         justify-content: center;
         border-radius: 4px;
         font-weight: 500;
         text-transform: uppercase;
      }
      .annotate {
         width: 106px;
         height: 36.5px;
         margin-right: 32px;
         background: #7b1fa2;
         color: #fff;
         font-size: 14px;
         letter-spacing: 0.4px;
         box-shadow: 0 3px 1px -2px rgba(0, 0, 0, 0.2), 0 2px 2px rgba(0, 0, 0, 0.14), 0 1px 5px rgba(0, 0, 0, 0.12);
      }
      .bell {
         display: flex;
         align-items: center;
         justify-content: center;
         width: 34px;
         height: 34px;
         border: 1px solid #e0e3e7;
         border-radius: 4px;
         color: #7b1fa2;
      }

      /* body */
      .content { padding: 16px 40px 0 }
      .notice {
         display: flex;
         align-items: center;
         gap: 12px;
         height: 48px;
         padding: 0 16px;
         border-radius: 4px;
         background: #f4edf8;
         font-size: 14px;
         color: #3b1e48;
      }
      .notice .icon {
         width: 22px;
         height: 22px;
         color: #7b1fa2;
         opacity: 0.9;
      }
      .notice-link { color: #0072c6 }
      .columns {
         display: flex;
         gap: 16.5px;
         margin: 24px 8px 0;
      }
      .graph-column {
         display: flex;
         flex-direction: column;
         gap: 8px;
         width: 984.5px;
      }
      .side-column {
         display: flex;
         flex-direction: column;
         gap: 8.5px;
         flex: 1;
      }
      .card {
         border: 1px solid #e0e0e0;
         border-radius: 4px;
         background: #fff;
      }
      .legend {
         display: grid;
         grid-template-columns: repeat(4, 1fr);
         height: 55px;
         padding: 0 8px;
         font-size: 14px;
      }
      .legend-item {
         display: flex;
         align-items: center;
         justify-content: center;
         gap: 8px;
      }
      .swatch {
         width: 16px;
         height: 16px;
         border: 1px solid #7b1fa2;
         background: #dcc5e7;
      }
      .round { border-radius: 50% }
      .dashed { border-style: dashed }
      .stroke {
         width: 16px;
         height: 2px;
         background: #9e9e9e;
      }
      .broken {
         background: repeating-linear-gradient(90deg, #9e9e9e 0 2.8px, transparent 2.8px 4.4px);
      }
      .graph {
         display: flex;
         justify-content: center;
         height: 800px;
      }
      .graph knowledge-graph {
         margin: -1px 0;
      }

      /* filters */
      .card-title {
         height: 56.5px;
         padding: 0 16px;
         border-bottom: 1px solid #e0e0e0;
         font-weight: 500;
         line-height: 57px;
      }
      .filters-body { padding: 16.8px 16px 17px }
      filter-tree + filter-tree { margin-top: 17.2px }
      .fields {
         display: flex;
         flex-direction: column;
         gap: 16px;
      }
      .field {
         position: relative;
         display: flex;
         align-items: center;
         height: 40px;
         padding: 0 6px 0 14px;
         border: 1px solid rgba(0, 0, 0, 0.24);
         border-radius: 4px;
      }
      .field-value { flex: 1 }
      .placeholder { color: rgba(0, 0, 0, 0.6) }
      .disabled { color: rgba(0, 0, 0, 0.38) }
      .field .icon { color: rgba(0, 0, 0, 0.54) }
      .field .faded { color: rgba(0, 0, 0, 0.26) }
      .field-label {
         position: absolute;
         left: 8px;
         top: -9.6px;
         padding: 0 5px;
         background: #fff;
         font-size: 12px;
         line-height: 16px;
         color: rgba(0, 0, 0, 0.6);
      }
      .actions {
         display: flex;
         justify-content: flex-end;
         gap: 16px;
         padding: 16px;
         border-radius: 0 0 4px 4px;
         background: #fbf9fc;
      }
      .small {
         width: 64px;
         height: 30.75px;
         font-size: 13px;
         letter-spacing: 0.46px;
      }
      .reset {
         border: 1px solid rgba(123, 31, 162, 0.5);
         background: #fff;
         color: #7b1fa2;
      }
      .apply {
         background: #7b1fa2;
         color: #fff;
      }
      .counts {
         display: flex;
         align-items: center;
         justify-content: space-around;
         height: 50.5px;
         padding: 0 28px;
         font-size: 12px;
         letter-spacing: 0.4px;
      }
      .count {
         display: flex;
         gap: 15.4px;
      }
      .count-value { font-weight: 500 }
      .count-name { color: #9e9e9e }
   `

   renderNavItem([glyph, label]: string[]) {
      return html`
         <div class=${classMap({ 'nav-item': true, active: label === 'Knowledge Graph' })}>
            ${icon(glyph)}<span>${label}</span>
         </div>
      `
   }

   renderSidebar() {
      return html`
         <nav class="sidebar">
            <div class="brand">
               ${icon('apps')}
               <span class="brand-name">QuickGraph</span>
               ${icon('menuOpen', 'grey')}
            </div>
            <div class="project">MaintIE Project</div>
            ${NAV.map((item) => this.renderNavItem(item))}
            <div class="spacer"></div>
            ${NAV_BOTTOM.map((item) => this.renderNavItem(item))}
            <div class="user">
               <div class="avatar">t</div>
               <div>
                  <div class="user-name">tyler-research</div>
                  <div class="user-mail">tyler.bikaun@research.uwa.edu.au</div>
               </div>
            </div>
         </nav>
      `
   }

   renderFilters() {
      return html`
         <div class="card">
            <div class="card-title">Filters</div>
            <div class="filters-body">
               <div class="fields">
                  <div class="field"><span class="field-value placeholder">Entity search...</span></div>
                  <div class="field">
                     <span class="field-value disabled">Graph Type</span>
                     ${icon('dropDown', 'faded')}
                  </div>
                  ${SELECTS.map(([label, value]) => html`
                     <div class="field">
                        <span class="field-label">${label}</span>
                        <span class="field-value">${value}</span>
                        ${icon('dropDown')}
                     </div>
                  `)}
               </div>
               <filter-tree heading="Nodes" .items=${NODE_ITEMS}></filter-tree>
               <filter-tree heading="Links" .items=${LINK_ITEMS}></filter-tree>
            </div>
            <div class="actions">
               <div class="button small reset">Reset</div>
               <div class="button small apply">Apply</div>
            </div>
         </div>
      `
   }

   render() {
      return html`
         <div class="page">
            ${this.renderSidebar()}
            <main class="main">
               <header class="header">
                  <div class="titles">
                     <h1 class="title">Knowledge-Graph</h1>
                     <div class="subtitle">Dashboard</div>
                  </div>
                  <div class="button annotate">Annotate</div>
                  <div class="bell">${icon('bell')}</div>
               </header>
               <div class="content">
                  <div class="notice">
                     ${icon('info')}
                     <span>To learn more about project knowledge graphs in QuickGraph <u class="notice-link">click here.</u></span>
                  </div>
                  <div class="columns">
                     <div class="graph-column">
                        <div class="card legend">
                           <div class="legend-item"><span class="swatch round"></span>Silver Entity</div>
                           <div class="legend-item"><span class="swatch dashed"></span>Weak Entity</div>
                           <div class="legend-item"><span class="stroke"></span>Silver Relation</div>
                           <div class="legend-item"><span class="stroke broken"></span>Weak Relation</div>
                        </div>
                        <div class="card graph"><knowledge-graph></knowledge-graph></div>
                     </div>
                     <div class="side-column">
                        ${this.renderFilters()}
                        <div class="card">
                           <div class="card-title">Details</div>
                           <div class="counts">
                              <div class="count"><span class="count-value">789</span><span class="count-name">Nodes</span></div>
                              <div class="count"><span class="count-value">1060</span><span class="count-name">Links</span></div>
                           </div>
                        </div>
                     </div>
                  </div>
               </div>
            </main>
         </div>
      `
   }
}
